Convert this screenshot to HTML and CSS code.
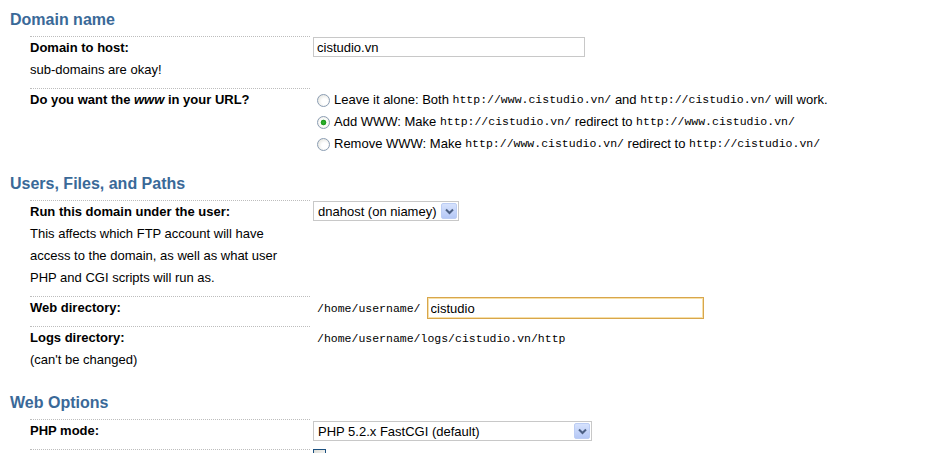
FILE: index.html
```html
<!DOCTYPE html>
<html lang="en">
<head>
    <meta charset="UTF-8">
    <title>Fully Hosted Domain</title>
    <link rel="stylesheet" href="styles.css">
</head>
<body>
    <form class="domain-form">
        <h2 class="section-title">Domain name</h2>
        <div class="section">
            <div class="row">
                <div class="label">
                    <strong>Domain to host:</strong><br>
                    sub-domains are okay!
                </div>
                <div class="value">
                    <input type="text" class="text-field domain-field" value="cistudio.vn">
                </div>
            </div>
            <div class="row">
                <div class="label">
                    <strong>Do you want the <em>www</em> in your URL?</strong>
                </div>
                <div class="value choices">
                    <label class="choice"><input type="radio" name="www" class="radio">Leave it alone: Both <code>http://www.cistudio.vn/</code> and <code>http://cistudio.vn/</code> will work.</label>
                    <label class="choice"><input type="radio" name="www" class="radio" checked>Add WWW: Make <code>http://cistudio.vn/</code> redirect to <code>http://www.cistudio.vn/</code></label>
                    <label class="choice"><input type="radio" name="www" class="radio">Remove WWW: Make <code>http://www.cistudio.vn/</code> redirect to <code>http://cistudio.vn/</code></label>
                </div>
            </div>
        </div>

        <h2 class="section-title">Users, Files, and Paths</h2>
        <div class="section">
            <div class="row">
                <div class="label">
                    <strong>Run this domain under the user:</strong><br>
                    This affects which FTP account will have<br>
                    access to the domain, as well as what user<br>
                    PHP and CGI scripts will run as.
                </div>
                <div class="value">
                    <span class="select user-select">
                        <select>
                            <option>dnahost (on niamey)</option>
                        </select>
                        <span class="select-arrow">
                            <svg width="9" height="7" viewBox="0 0 9 7"><path d="M1 1.5 L4.5 5 L8 1.5" fill="none" stroke="#4d6185" stroke-width="2"/></svg>
                        </span>
                    </span>
                </div>
            </div>
            <div class="row">
                <div class="label">
                    <strong>Web directory:</strong>
                </div>
                <div class="value">
                    <code class="path">/home/username/</code><input type="text" class="text-field dir-field" value="cistudio">
                </div>
            </div>
            <div class="row">
                <div class="label">
                    <strong>Logs directory:</strong><br>
                    (can't be changed)
                </div>
                <div class="value">
                    <code class="path">/home/username/logs/cistudio.vn/http</code>
                </div>
            </div>
        </div>

        <h2 class="section-title">Web Options</h2>
        <div class="section">
            <div class="row">
                <div class="label">
                    <strong>PHP mode:</strong>
                </div>
                <div class="value">
                    <span class="select php-select">
                        <select>
                            <option>PHP 5.2.x FastCGI (default)</option>
                        </select>
                        <span class="select-arrow">
                            <svg width="9" height="7" viewBox="0 0 9 7"><path d="M1 1.5 L4.5 5 L8 1.5" fill="none" stroke="#4d6185" stroke-width="2"/></svg>
                        </span>
                    </span>
                </div>
            </div>
            <div class="row">
                <div class="label"></div>
                <div class="value checkbox-cell">
                    <input type="checkbox" class="checkbox">
                </div>
            </div>
        </div>
    </form>
</body>
</html>
```

FILE: styles.css
```css
body {
    margin: 0;
    padding: 10px 0 0 0;
    font-family: Arial, "Liberation Sans", sans-serif;
    font-size: 13px;
    line-height: 22px;
    color: #000;
    background: #fff;
}

.section-title {
    margin: 0 0 6px 10px;
    font-size: 16px;
    line-height: 20px;
    font-weight: bold;
    color: #3a6998;
}

.section {
    margin: 0 0 15px 30px;
}

.row {
    display: grid;
    grid-template-columns: 280px 1fr;
    column-gap: 3px;
}

.label {
    border-top: 1px dotted #bdbdbd;
    padding-bottom: 7px;
    min-height: 22px;
}

.label strong {
    font-weight: bold;
}

.value {
    padding-top: 1px;
}

.choices {
    padding-bottom: 4px;
}

code {
    font-family: "Liberation Mono", "Courier New", monospace;
    font-size: 11.5px;
}

.path {
    padding-left: 4px;
}

.choice {
    display: flex;
    align-items: center;
    white-space: pre;
}

.text-field {
    box-sizing: border-box;
    height: 20px;
    padding: 0 3px;
    margin: 0;
    border: 1px solid #c8c8c8;
    font-family: Arial, "Liberation Sans", sans-serif;
    font-size: 13px;
    color: #000;
    vertical-align: top;
}

.domain-field {
    width: 272px;
}

.dir-field {
    width: 277px;
    height: 22px;
    margin-left: 6px;
    border: 1px solid #d8a64c;
    box-shadow: inset 0 0 0 1px #f7e0a8;
    outline: none;
}

.radio {
    appearance: none;
    box-sizing: border-box;
    width: 13px;
    height: 13px;
    margin: 0 4px 0 4px;
    border: 1px solid #8b9db3;
    border-radius: 50%;
    background: radial-gradient(circle at 60% 60%, #ffffff 30%, #dcdcd4 100%);
}

.radio:checked {
    background: radial-gradient(circle, #2fb82f 0, #1f9a1f 2.5px, #ffffff 3.2px, #e4e4dc 100%);
}

.select {
    display: inline-flex;
    align-items: center;
    box-sizing: border-box;
    height: 20px;
    border: 1px solid #c8c8c8;
    background: #fff;
    vertical-align: top;
}

.select select {
    appearance: none;
    flex: 1;
    border: none;
    background: transparent;
    padding: 0 0 0 4px;
    margin: 0;
    font-family: Arial, "Liberation Sans", sans-serif;
    font-size: 13px;
    color: #000;
    outline: none;
}

.user-select {
    width: 146px;
}

.php-select {
    width: 279px;
    margin-top: 1px;
}

.select-arrow {
    display: flex;
    align-items: center;
    justify-content: center;
    box-sizing: border-box;
    width: 16px;
    height: 16px;
    margin-right: 1px;
    border: 1px solid #bccdf4;
    border-radius: 2px;
    background: linear-gradient(#d6e2fd, #b5c8f6);
}

.checkbox-cell {
    padding-top: 0;
}

.checkbox {
    appearance: none;
    box-sizing: border-box;
    width: 13px;
    height: 13px;
    margin: 0;
    border: 1px solid #1c5180;
    background: linear-gradient(135deg, #dcdcd6, #ffffff);
    vertical-align: top;
}
```
